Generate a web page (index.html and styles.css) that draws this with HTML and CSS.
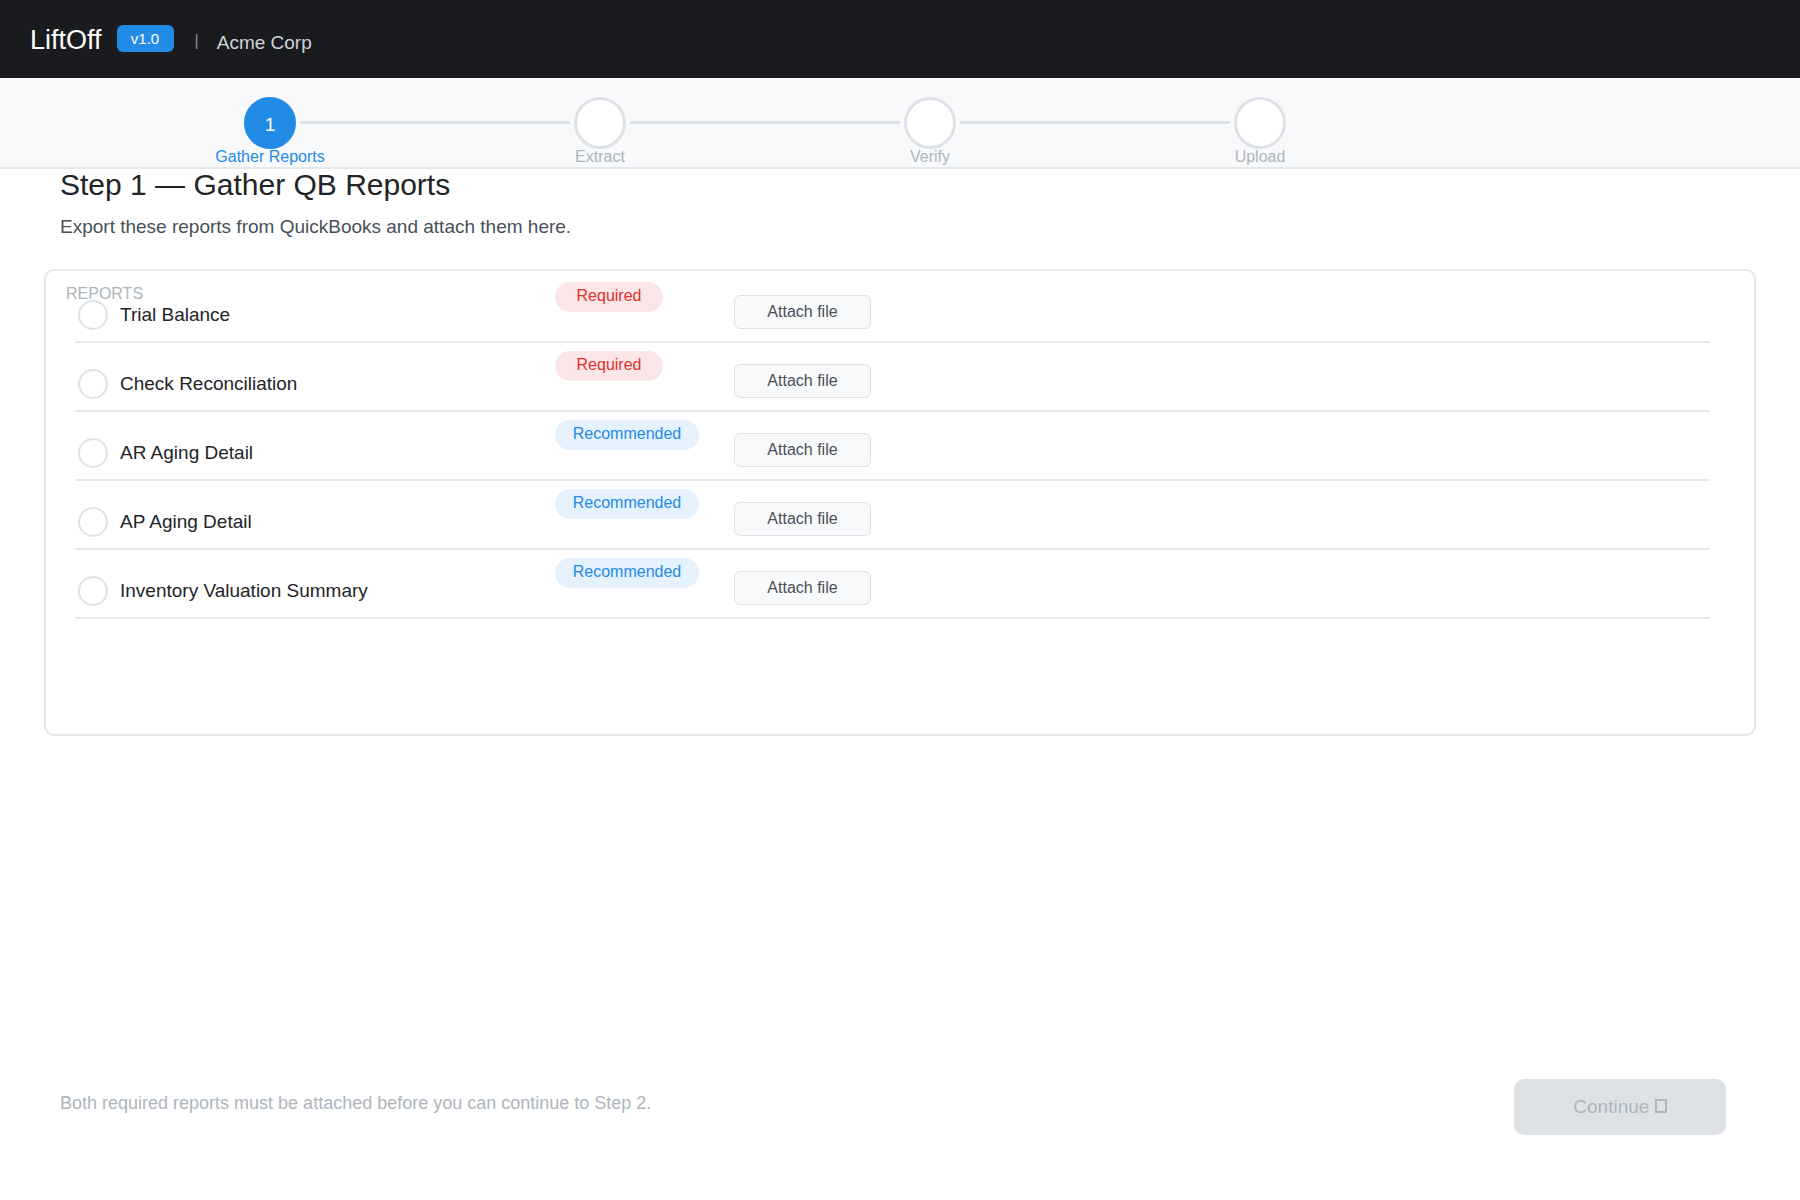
FILE: index.html
```html
<!DOCTYPE html>
<html lang="en">
<head>
    <meta charset="UTF-8">
    <meta name="viewport" content="width=device-width, initial-scale=1.0">
    <title>LiftOff - Gather Reports</title>
    <link rel="stylesheet" href="styles.css">
</head>
<body>
    <header class="topbar">
        <span class="brand">LiftOff</span>
        <span class="version">v1.0</span>
        <span class="divider">|</span>
        <span class="company">Acme Corp</span>
    </header>

    <!--steps-->
    <nav class="stepper">
        <ol class="steps">
            <li class="step active">
                <div class="marker"><span class="circle">1</span><span class="step-name">Gather Reports</span></div>
            </li>
            <li class="step">
                <div class="marker"><span class="circle"></span><span class="step-name">Extract</span></div>
            </li>
            <li class="step">
                <div class="marker"><span class="circle"></span><span class="step-name">Verify</span></div>
            </li>
            <li class="step">
                <div class="marker"><span class="circle"></span><span class="step-name">Upload</span></div>
            </li>
        </ol>
    </nav>

    <main>
        <div class="intro">
            <h1>Step 1 — Gather QB Reports</h1>
            <p>Export these reports from QuickBooks and attach them here.</p>
        </div>

        <section class="card">
            <h2>REPORTS</h2>
            <ul class="reports">
                <li>
                    <div class="report"><input type="checkbox" id="trial"><label for="trial">Trial Balance</label></div>
                    <div><span class="badge required">Required</span></div>
                    <button type="button" class="attach">Attach file</button>
                </li>
                <li>
                    <div class="report"><input type="checkbox" id="check"><label for="check">Check Reconciliation</label></div>
                    <div><span class="badge required">Required</span></div>
                    <button type="button" class="attach">Attach file</button>
                </li>
                <li>
                    <div class="report"><input type="checkbox" id="ar"><label for="ar">AR Aging Detail</label></div>
                    <div><span class="badge recommended">Recommended</span></div>
                    <button type="button" class="attach">Attach file</button>
                </li>
                <li>
                    <div class="report"><input type="checkbox" id="ap"><label for="ap">AP Aging Detail</label></div>
                    <div><span class="badge recommended">Recommended</span></div>
                    <button type="button" class="attach">Attach file</button>
                </li>
                <li>
                    <div class="report"><input type="checkbox" id="inventory"><label for="inventory">Inventory Valuation Summary</label></div>
                    <div><span class="badge recommended">Recommended</span></div>
                    <button type="button" class="attach">Attach file</button>
                </li>
            </ul>
        </section>
    </main>

    <footer class="actions">
        <p>Both required reports must be attached before you can continue to Step 2.</p>
        <button type="button" class="continue" disabled>Continue <span class="box"></span></button>
    </footer>
</body>
</html>
```
FILE: styles.css
```css
*{
    box-sizing: border-box;
}
body{
    margin: 0;
    min-height: 100vh;
    display: flex;
    flex-direction: column;
    font-family: "Liberation Sans", Arial, sans-serif;
    font-size: 19px;
    color: #212529;
    background-color: #fff;
}
h1,h2,p,ol,ul{
    margin: 0;
    padding: 0;
    font-weight: normal;
    list-style: none;
}
button{
    font-family: inherit;
}

/* top bar */
.topbar{
    display: flex;
    align-items: flex-start;
    height: 78px;
    padding: 25px 30px 0;
    background-color: #1a1b1e;
}
.brand{
    font-size: 27px;
    line-height: 30px;
    color: #fff;
}
.version{
    width: 57px;
    margin: 0 21px 0 15px;
    border-radius: 6px;
    background-color: #228be6;
    color: #fff;
    font-size: 15px;
    line-height: 27px;
    text-align: center;
}
.divider{
    font-size: 16px;
    line-height: 32px;
    color: #868e96;
}
.company{
    margin-left: 18px;
    line-height: 35px;
    color: #ced4da;
}

/* stepper */
.stepper{
    height: 91px;
    padding: 19px 30px 0 240px;
    background-color: #f8f9fb;
    border-bottom: 2px solid #e5e7ea;
}
.steps{
    display: flex;
    max-width: 1050px;
}
.step{
    display: flex;
    flex: 1;
}
.step:last-child{
    flex: none;
}
.step:not(:last-child)::after{
    content: "";
    flex: 1;
    height: 3px;
    margin-top: 24px;
    background-color: #dee2e6;
}
.marker{
    display: flex;
    flex-direction: column;
    align-items: center;
    width: 60px;
}
.circle{
    width: 52px;
    height: 52px;
    border: 3px solid #dee2e6;
    border-radius: 50%;
    background-color: #fff;
    text-align: center;
    line-height: 50px;
    flex: none;
}
.active .circle{
    background-color: #228be6;
    border-color: #228be6;
    color: #fff;
}
.step-name{
    font-size: 16px;
    line-height: 16px;
    white-space: nowrap;
    color: #adb5bd;
}
.active .step-name{
    color: #228be6;
}

/* content */
main{
    padding: 0 44px;
}
.intro{
    height: 100px;
    padding: 0 16px;
}
.intro h1{
    font-size: 30px;
    line-height: 32px;
}
.intro p{
    margin-top: 14px;
    line-height: 24px;
    color: #495057;
}
.card{
    position: relative;
    min-height: 467px;
    padding: 3px 44px 0 29px;
    border: 2px solid #e5e8eb;
    border-radius: 10px;
}
.card h2{
    position: absolute;
    top: 13px;
    left: 20px;
    font-size: 16px;
    line-height: 20px;
    color: #adb5bd;
}
.reports li{
    display: grid;
    grid-template-columns: 480px 179px 1fr;
    align-items: start;
    justify-items: start;
    height: 69px;
    border-bottom: 2px solid #e5e8eb;
}
.report{
    display: flex;
    align-items: center;
    gap: 12px;
    padding: 26px 0 0 3px;
}
.report input{
    appearance: none;
    width: 30px;
    height: 30px;
    margin: 0;
    border: 2px solid #dee2e6;
    border-radius: 50%;
    background-color: #fff;
}
.badge{
    display: block;
    height: 30px;
    margin-top: 8px;
    border-radius: 15px;
    font-size: 16px;
    line-height: 27px;
    text-align: center;
}
.required{
    width: 108px;
    background-color: #fae6e6;
    color: #e03131;
}
.recommended{
    width: 144px;
    background-color: #e5f1fd;
    color: #228be6;
}
.attach{
    width: 137px;
    height: 34px;
    margin-top: 21px;
    border: 1px solid #dee2e6;
    border-radius: 6px;
    background-color: #f8f9fb;
    color: #495057;
    font-size: 16px;
}

/* bottom */
.actions{
    display: flex;
    align-items: flex-start;
    justify-content: space-between;
    margin-top: auto;
    padding: 0 74px 65px 60px;
    font-size: 18px;
    line-height: 48px;
    color: #adb5bd;
}
.continue{
    width: 212px;
    height: 56px;
    border: none;
    border-radius: 10px;
    background-color: #dee2e6;
    color: #adb5bd;
    font-size: 19px;
}
.box{
    display: inline-block;
    width: 12px;
    height: 14px;
    border: 2px solid #adb5bd;
}
```
